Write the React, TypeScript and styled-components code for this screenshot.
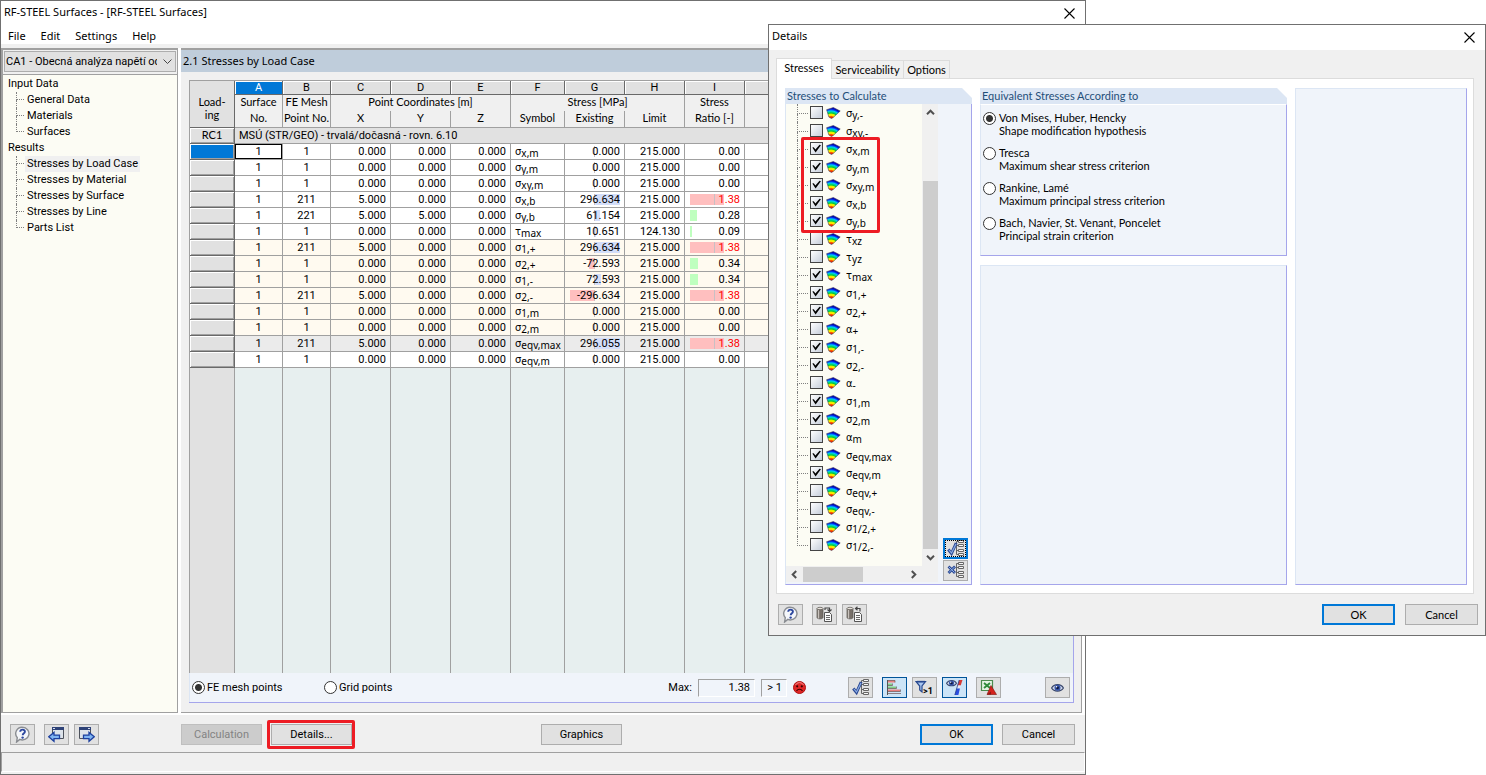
import React from "react";
import styled, { createGlobalStyle, css } from "styled-components";

const ui = `Roboto, "Liberation Sans", sans-serif`;
const caption = `"Noto Sans", "Open Sans", sans-serif`;
const compact = `Lato, "Liberation Sans", sans-serif`;

const Global = createGlobalStyle`
  *, *::before, *::after { box-sizing: border-box; }
  body { margin: 0; background: #fff; color: #000; font: 11px/16px ${ui}; }
  button, input, select { font: inherit; color: inherit; margin: 0; }
  ul { list-style: none; margin: 0; padding: 0; }
  h1, h2, h3 { margin: 0; font-weight: 400; font-size: 11px; }
`;

const Desktop = styled.div`
  position: relative;
  min-height: 100vh;
  display: flex;
  padding-right: 400px;
`;

/* ---------- shared controls ---------- */

const CloseButton = styled.button`
  width: 31px;
  height: 24px;
  padding: 0;
  border: 0;
  background: none;
  display: grid;
  place-items: center;
`;

const PushButton = styled.button<{ $w: number; $primary?: boolean }>`
  position: relative;
  width: ${(p) => p.$w}px;
  height: 21px;
  padding: 0;
  border: ${(p) => (p.$primary ? "2px solid #0078d7" : "1px solid #adadad")};
  background: #e1e1e1;
  text-align: center;
  line-height: 16px;
  &:disabled {
    background: #cccccc;
    border-color: #bfbfbf;
    color: #838383;
  }
`;

const RedFrame = css`
  content: "";
  position: absolute;
  border: 3px solid #ed1c24;
  border-radius: 2px;
  pointer-events: none;
`;

const HighlightedButton = styled(PushButton)`
  &::after {
    ${RedFrame}
    inset: -5px -4px -5px -5px;
  }
`;

const IconButton = styled.button<{ $on?: boolean; $focus?: boolean }>`
  width: 25px;
  height: 21px;
  padding: 0;
  display: grid;
  place-items: center;
  border: 1px solid ${(p) => (p.$on ? "#005499" : "#adadad")};
  background: ${(p) => (p.$on ? "#cce4f7" : "#e1e1e1")};
  ${(p) => p.$focus && "border: 2px solid #0078d7; outline: 1px dotted #000; outline-offset: -3px;"}
`;

const Radio = styled.input.attrs({ type: "radio" })`
  appearance: none;
  flex: none;
  width: 13px;
  height: 13px;
  border: 1px solid #333;
  border-radius: 50%;
  background: #fff;
  &:checked {
    background: radial-gradient(circle, #333 0 3px, #fff 4px);
  }
`;

const Check = styled.input.attrs({ type: "checkbox" })`
  appearance: none;
  flex: none;
  width: 13px;
  height: 13px;
  border: 1px solid #444;
  background: linear-gradient(135deg, #fff, #c6cedb);
  &:checked::after {
    content: "";
    display: block;
    width: 11px;
    height: 11px;
    background: #000;
    clip-path: polygon(12% 42%, 25% 38%, 40% 58%, 78% 16%, 90% 20%, 42% 86%);
  }
`;

/* ---------- main window ---------- */

const MainWindow = styled.div`
  flex: 1;
  min-width: 780px;
  display: flex;
  flex-direction: column;
  border: 1px solid #707070;
  background: #f0f0f0;
`;

const TitleBar = styled.header`
  flex: none;
  display: flex;
  align-items: center;
  justify-content: space-between;
  padding: 0 0 1px 3px;
  background: #fff;
  font-family: ${caption};
  line-height: 14px;
`;

const WindowTitle = styled.h1`
  padding-bottom: 2px;
`;

const MenuBar = styled.nav`
  height: 18px;
  flex: none;
  display: flex;
  align-items: center;
  gap: 15px;
  padding: 2px 0 0 7px;
  background: #fff;
  font-family: ${caption};
`;

const MenuItem = styled.button`
  padding: 0;
  border: 0;
  background: none;
  line-height: 16px;
`;

const Workspace = styled.div`
  flex: 1;
  display: flex;
  gap: 3px;
  margin-top: 4px;
  padding-right: 3px;
  background: #fff;
  border-bottom: 2px solid #fff;
`;

const Sidebar = styled.aside`
  flex: none;
  width: 177px;
  display: flex;
  flex-direction: column;
  border: 1px solid #a0a0a0;
  border-width: 2px 1px 1px 2px;
  background: #fcfcf4;
`;

const CaseBar = styled.div`
  position: relative;
  height: 25px;
  padding: 1px 1px 2px;
  background: #f0f0f0;
  border-bottom: 1px solid #a0a0a0;
`;

const CaseSelect = styled.select`
  appearance: none;
  display: block;
  width: 100%;
  height: 21px;
  padding: 0 18px 0 1px;
  border: 1px solid #adadad;
  border-radius: 0;
  background: #e1e1e1;
  text-overflow: clip;
`;

const SelectArrow = styled.svg`
  position: absolute;
  right: 5px;
  top: 9px;
  pointer-events: none;
`;

const Tree = styled.ul`
  && { padding-top: 1px; }
`;

const TreeRoot = styled.li`
  padding-left: 5px;
`;

const TreeChildren = styled.ul`
  && { padding-left: 8px; }
`;

const TreeLeaf = styled.li`
  position: relative;
  height: 16px;
  padding-left: 9px;
  &::before {
    content: "";
    position: absolute;
    left: 0;
    top: 0;
    width: 8px;
    height: 8px;
    border-left: 1px dotted #808080;
    border-bottom: 1px dotted #808080;
  }
  &:not(:last-child)::after {
    content: "";
    position: absolute;
    left: 0;
    top: 8px;
    height: 8px;
    border-left: 1px dotted #808080;
  }
`;

const TreeLink = styled.a<{ $active?: boolean }>`
  display: inline-block;
  padding: 0 2px;
  color: inherit;
  text-decoration: none;
  background: ${(p) => (p.$active ? "#f0f0f0" : "none")};
`;

const Content = styled.main`
  flex: 1;
  min-width: 0;
  display: flex;
  flex-direction: column;
  border: 0 solid #a0a0a0;
  border-width: 2px 1px 1px 0;
  background: #f0f0f0;
`;

const ContentHeading = styled.h2`
  flex: none;
  padding: 0 2px;
  background: #bfcddb;
  line-height: 22px;
  font-family: ${caption};
`;

const GridPanel = styled.section`
  flex: 1;
  display: flex;
  flex-direction: column;
  margin: 8px 7px 9px 8px;
  border: 0 solid #a5a5eb;
  border-width: 0 1px 1px 0;
`;

const Sheet = styled.table`
  flex: 1;
  width: 100%;
  table-layout: fixed;
  border-collapse: separate;
  border-spacing: 0;
  border-top: 1px solid #a0a0a0;
  border-left: 1px solid #a0a0a0;
  background: #f0f0f0;
  th, td { padding: 0; font-weight: 400; overflow: hidden; white-space: nowrap; line-height: 14px; }
  th { font-family: ${compact}; }
`;

const Col = styled.col<{ $w?: number }>`
  width: ${(p) => (p.$w ? `${p.$w}px` : "auto")};
`;

const Tr = styled.tr<{ $h: number; $bg?: string }>`
  height: ${(p) => p.$h}px;
  background: ${(p) => p.$bg ?? "transparent"};
`;

const CornerTh = styled.th`
  background: #e1e1e1;
  border-right: 1px solid #696969;
  border-bottom: 1px solid #696969;
`;

const CornerText = styled.span`
  display: block;
  line-height: 13px;
  padding-top: 8px;
`;

const LetterTh = styled.th<{ $active?: boolean }>`
  background: ${(p) => (p.$active ? "#0078d7" : "#e1e1e1")};
  color: ${(p) => (p.$active ? "#fff" : "#000")};
  border-right: 1px solid #696969;
  border-bottom: 1px solid #696969;
  box-shadow: inset 1px 1px #fff;
  && { line-height: 13px; font-family: ${ui}; }
`;

const HeadTh = styled.th<{ $last?: boolean }>`
  border-right: 1px solid #a0a0a0;
  border-bottom: ${(p) => (p.$last ? "1px solid #a0a0a0" : "0")};
  vertical-align: top;
  && { line-height: 13px; }
`;

const RowTh = styled.th<{ $active?: boolean }>`
  background: ${(p) => (p.$active ? "#0078d7" : "#e1e1e1")};
  border-right: 1px solid #696969;
  border-bottom: 1px solid #696969;
  box-shadow: inset 1px 1px #fff, inset -1px -1px #a0a0a0;
  vertical-align: top;
`;

const GroupTd = styled.td`
  && { padding: 1px 0 0 4px; }
  background: #e1e1e1;
  border-bottom: 1px solid #a0a0a0;
`;

const Td = styled.td<{ $align?: "center" | "right" | "left"; $alert?: boolean; $cursor?: boolean }>`
  position: relative;
  text-align: ${(p) => p.$align ?? "right"};
  color: ${(p) => (p.$alert ? "#ff0000" : "inherit")};
  border-right: 1px solid #a0a0a0;
  border-bottom: 1px solid #a0a0a0;
  && { padding: 1px ${(p) => ((p.$align ?? "right") === "right" ? "4px 0 0" : p.$align === "left" ? "0 0 4px" : "0 0")}; }
  ${(p) => p.$cursor && "box-shadow: inset 0 0 0 1px #000;"}
`;

const EmptyTd = styled.td<{ $head?: boolean }>`
  background: ${(p) => (p.$head ? "#e1e1e1" : "#e7efef")};
  border-right: 1px solid #a0a0a0;
  &:last-child { border-right: 0; }
`;

const Bar = styled.span<{ $tone: "blue" | "red" | "green" }>`
  position: absolute;
  top: 2px;
  height: 11px;
  background: ${(p) => ({ blue: "#d3defa", red: "#ffbfbf", green: "#bfffbf" })[p.$tone]};
`;

const Axis = styled.span<{ $at: number }>`
  position: absolute;
  top: 2px;
  left: ${(p) => p.$at}px;
  width: 1px;
  height: 11px;
  background: #c8c0c4;
`;

const CellText = styled.span`
  position: relative;
`;

const SymbolText = styled.span`
  display: inline-flex;
  align-items: baseline;
  font: 10px/14px "DejaVu Sans", sans-serif;
`;

const SymbolSub = styled.sub`
  position: relative;
  top: 2px;
  vertical-align: baseline;
  font: 10px/12px "Noto Sans", sans-serif;
`;

const Toolbar = styled.div`
  flex: none;
  height: 29px;
  display: flex;
  align-items: center;
  padding: 0 3px 0 2px;
  border-left: 1px solid #dce6f4;
  background: #f0f4fa;
`;

const RadioLabel = styled.label`
  display: flex;
  align-items: center;
  gap: 2px;
  width: 132px;
`;

const MaxGroup = styled.div`
  flex: 1;
  display: flex;
  justify-content: flex-end;
  align-items: center;
  gap: 6px;
  margin-right: 42px;
`;

const Readout = styled.output<{ $w: number }>`
  width: ${(p) => p.$w}px;
  height: 18px;
  padding-right: 4px;
  border: 1px solid #a0a0a0;
  border-right-color: #fff;
  border-bottom-color: #fff;
  text-align: right;
  line-height: 16px;
`;

const ToolButtons = styled.div`
  display: flex;
  gap: 9px;
`;

const ToolPair = styled.div`
  display: flex;
  gap: 5px;
`;

const FarTool = styled.div`
  margin-left: 44px;
`;

const Footer = styled.footer`
  flex: none;
  display: flex;
  gap: 9px;
  padding: 9px 10px 7px 9px;
`;

const FooterActions = styled.div`
  display: flex;
  gap: 9px;
  margin-left: 73px;
`;

const GraphicsSlot = styled.div`
  flex: 1;
  margin-left: 180px;
`;

const StatusBar = styled.div`
  flex: none;
  height: 22px;
  padding-bottom: 2px;
  &::before {
    content: "";
    display: block;
    height: 20px;
    border: 1px solid #a0a0a0;
    border-right-color: #fff;
    border-bottom-color: #fff;
  }
`;

/* ---------- details dialog ---------- */

const Dialog = styled.div`
  position: absolute;
  top: 24px;
  right: 0;
  width: calc(100% - 768px);
  min-width: 700px;
  border: 1px solid #707070;
  background: #f0f0f0;
  font-family: ${compact};
`;

const TabStrip = styled.div`
  display: flex;
  align-items: flex-end;
  padding: 8px 7px 0;
`;

const Tab = styled.button<{ $active?: boolean; $w: number }>`
  position: relative;
  width: ${(p) => p.$w}px;
  height: ${(p) => (p.$active ? 21 : 18)}px;
  margin-bottom: ${(p) => (p.$active ? "-1px" : "0")};
  padding: 0 0 ${(p) => (p.$active ? 2 : 0)}px;
  border: 1px solid #dcdcdc;
  border-bottom: 0;
  border-left-width: ${(p) => (p.$active ? 1 : 0)}px;
  background: ${(p) => (p.$active ? "#fff" : "#f0f0f0")};
  z-index: 1;
`;

const TabPage = styled.div`
  display: grid;
  grid-template-columns: 187px 307px 1fr;
  gap: 8px;
  min-height: 516px;
  margin: 0 11px 0 7px;
  padding: 9px 6px 8px 8px;
  border: 1px solid #dcdcdc;
  background: #fff;
`;

const Stack = styled.div`
  display: grid;
  grid-template-rows: 168px 1fr;
  gap: 9px;
`;

const Group = styled.section`
  border: 1px solid #dce6f4;
  border-right-color: #a5a5eb;
  border-bottom-color: #a5a5eb;
  background: #f0f4fa;
`;

const TitledGroup = styled.section`
  display: flex;
  flex-direction: column;
`;

const GroupHeading = styled.h3`
  flex: none;
  height: 16px;
  padding-left: 2px;
  background: #dce6f4;
  color: #1f4e79;
  line-height: 15px;
  clip-path: polygon(0 0, calc(100% - 10px) 0, 100% 10px, 100% 100%, 0 100%);
`;

const GroupBody = styled.div`
  flex: 1;
  display: flex;
  border: 0 solid #a5a5eb;
  border-width: 0 1px 1px 0;
  border-left: 1px solid #dce6f4;
  background: #f0f4fa;
`;

const OptionsBody = styled(GroupBody)`
  flex-direction: column;
  gap: 10px;
  padding: 6px 0 0 2px;
  border-top: 1px solid #fff;
`;

const OptionLabel = styled.label`
  display: flex;
  gap: 3px;
  line-height: 13px;
  ${Radio} { margin-top: 1px; }
`;

const OptionText = styled.span`
  display: grid;
  height: 25px;
  align-content: start;
`;

const ListView = styled.div`
  flex: none;
  display: grid;
  grid-template: 1fr 16px / 136px 16px;
  margin: 0 5px 2px 0;
`;

const StressList = styled.ul`
  position: relative;
  background: #fcfcf4;
  && { padding-left: 11px; }
  &::after {
    ${RedFrame}
    left: 15px;
    top: 33px;
    width: 79px;
    height: 96px;
  }
`;

const StressItem = styled.li`
  position: relative;
  height: 18px;
  padding-left: 13px;
  &::before {
    content: "";
    position: absolute;
    left: 0;
    top: 0;
    width: 11px;
    height: 10px;
    border-left: 1px dotted #808080;
    border-bottom: 1px dotted #808080;
  }
  &:not(:last-child)::after {
    content: "";
    position: absolute;
    left: 0;
    top: 10px;
    height: 8px;
    border-left: 1px dotted #808080;
  }
`;

const StressLabel = styled.label`
  display: flex;
  align-items: center;
  gap: 3px;
  height: 17px;
  svg { margin-right: 2px; }
  ${SymbolText} { padding-top: 2px; }
`;

const VScroll = styled.div`
  display: grid;
  grid-template-rows: 17px 1fr 17px;
  justify-items: center;
  align-items: center;
  background: #f0f0f0;
`;

const VThumb = styled.div`
  align-self: end;
  width: 15px;
  height: 86%;
  background: #cdcdcd;
`;

const HScroll = styled.div`
  grid-column: 1 / -1;
  display: flex;
  align-items: center;
  justify-content: space-between;
  padding: 0 20px 0 4px;
  background: #f0f0f0;
`;

const HThumb = styled.div`
  width: 60px;
  height: 15px;
  margin-right: auto;
  margin-left: 4px;
  background: #cdcdcd;
`;

const SideTools = styled.div`
  display: flex;
  flex-direction: column;
  justify-content: flex-end;
  gap: 1px;
  padding-bottom: 3px;
`;

const DialogFooter = styled.footer`
  display: flex;
  gap: 5px;
  padding: 10px 7px 10px 9px;
`;

const DialogActions = styled.div`
  display: flex;
  gap: 10px;
  margin-left: auto;
`;

const HelpSlot = styled.div`
  margin-right: 4px;
`;

/* ---------- icons ---------- */

const Cross = () => (
  <svg width="11" height="11" viewBox="0 0 11 11" stroke="#000" strokeWidth="1.1">
    <path d="M.5.5l10 10M10.5.5l-10 10" />
  </svg>
);

const Chevron = ({ turn = 0 }: { turn?: number }) => (
  <svg width="9" height="9" viewBox="0 0 9 9" fill="none" stroke="#505050" strokeWidth="2">
    <path d="M1 6.2L4.500 2.700 8 6.200" transform={`rotate(${turn} 4.5 4.5)`} />
  </svg>
);

const HelpIcon = () => (
  <svg width="17" height="17" viewBox="0 0 17 17">
    <path d="M8.500 1.300a6.600 6.300 0 1 1-2.700 12.100L2.600 16l.7-4.300A6.400 6.300 0 0 1 8.500 1.300z" fill="#f4f6fa" stroke="#8a8d92" strokeWidth="1.400" />
    <path d="M6.200 5.700c.2-2.800 4.900-2.700 4.700 0-.1 1.600-2.200 1.700-2.200 3.600" fill="none" stroke="#2b469e" strokeWidth="1.900" />
    <circle cx="8.600" cy="11.600" r="1.200" fill="#2b469e" />
  </svg>
);

const WindowArrow = ({ next }: { next?: boolean }) => (
  <svg width="17" height="17" viewBox="0 0 17 17">
    <g transform={next ? "translate(17 0) scale(-1 1)" : undefined}>
      <path d="M4.500 1.500h11v11h-11z" fill="#dde3ea" stroke="#4d525c" />
      <path d="M4 1h12v3H4z" fill="#2f4378" />
      <path d="M5 2h2v1H5z" fill="#d5dcf0" />
      <path d="M.7 10.800L6 6.400v2.700h5.500v3.500H6v2.700z" fill="#7fb4f2" stroke="#1c3f9e" strokeWidth="1.300" />
    </g>
  </svg>
);

const Branches = () => (
  <g fill="none" stroke="#666">
    <path d="M9.500 1.500v13M9.500 1.500h2M9.500 5.500h2M9.500 10.500h2M9.500 14.500h2" />
    <path d="M11.500.5h5v2h-5zM11.500 4.500h5v2h-5zM11.500 9.500h5v2h-5zM11.500 13.500h5v2h-5z" fill="#f6f6f6" />
  </g>
);

const CheckTree = () => (
  <svg width="18" height="17" viewBox="0 0 18 17">
    <Branches />
    <path d="M1.300 9.500l3.200 4L9.200 3" fill="none" stroke="#2c4a94" strokeWidth="3" />
    <path d="M2 10l2.500 3L9 4" fill="none" stroke="#8fb0e8" strokeWidth="1.100" />
  </svg>
);

const CrossTree = () => (
  <svg width="18" height="17" viewBox="0 0 18 17">
    <Branches />
    <path d="M1.500 4.500l6.500 6.500M8 4.500L1.500 11" stroke="#2c4a94" strokeWidth="2.800" />
    <path d="M2 5l5.500 5.500M7.500 5L2 10.500" stroke="#8fb0e8" strokeWidth="1" />
  </svg>
);

const BarsIcon = () => (
  <svg width="17" height="15" viewBox="0 0 17 15">
    <path d="M1.500 0v15" stroke="#555" />
    <path d="M2 1.500h7M2 10.500h12" stroke="#e88080" strokeWidth="2" />
    <path d="M2 4.500h4M2 7.500h8" stroke="#80cc84" strokeWidth="2" />
    <path d="M2 .5h7v2M2 5.500h4.500v-2M2 8.500h8.500v-2M2 11.500h12.500v-2M2 13.500h13" fill="none" stroke="#6b5555" strokeWidth=".7" />
  </svg>
);

const FilterSvgText = styled.text`
  font: 700 9px Roboto, sans-serif;
`;

const FilterIcon = () => (
  <svg width="19" height="15" viewBox="0 0 19 15">
    <path d="M1 1.500h9.500L7 6v6L4.700 10V6z" fill="#a9c6f0" stroke="#27488f" strokeWidth="1.200" />
    <path d="M2 1.700h8" stroke="#27488f" strokeWidth="1.700" />
    <FilterSvgText x="8" y="14">&gt;1</FilterSvgText>
  </svg>
);

const Eye = ({ s = 1, y = 0 }: { s?: number; y?: number }) => (
  <g transform={`translate(0 ${y}) scale(${s})`}>
    <path d="M.6 5C3 .8 10 .4 12.400 5 10 9 3 9.200.6 5z" fill="#cdd6ea" stroke="#39476c" strokeWidth="1.200" />
    <circle cx="6.500" cy="4.800" r="3" fill="#3553a8" />
    <circle cx="6.500" cy="4.800" r="1.400" fill="#0c153a" />
    <circle cx="5.500" cy="3.700" r=".8" fill="#fff" />
  </g>
);

const EyeIcon = () => (
  <svg width="13" height="10" viewBox="0 0 13 10">
    <Eye />
  </svg>
);

const EyeScaleIcon = () => (
  <svg width="17" height="17" viewBox="0 0 17 17">
    <path d="M16.500 1h-3.300l-1.700 5.500h3.200z" fill="#d83a35" />
    <path d="M14.700 6.500h-3.200l-.9 3h3.300z" fill="#e9ecf6" />
    <path d="M13.900 9.500h-3.300L8.800 16h3.600z" fill="#2a4ee0" />
    <path d="M13.200 1L8.800 16" stroke="#29408c" strokeWidth=".8" />
    <Eye s={0.85} y={0} />
  </svg>
);

const SheetIcon = () => (
  <svg width="17" height="17" viewBox="0 0 17 17">
    <path d="M1.500 1.500h11v10h-11z" fill="#e4f3e4" stroke="#4b8b4e" strokeWidth="1.200" />
    <path d="M4 4l6 5M10 4L4 9" stroke="#2e8b3a" strokeWidth="1.900" />
    <path d="M11 6.500L16.500 15.500h-9.500z" fill="#d4221c" stroke="#7d100c" strokeWidth=".6" />
    <path d="M7 15.500h4v-3z" fill="#8c1914" />
  </svg>
);

const SadIcon = () => (
  <svg width="13" height="13" viewBox="0 0 13 13">
    <circle cx="6.500" cy="6.500" r="6" fill="#e02626" stroke="#b01212" />
    <path d="M2.500 4a4.500 4.500 0 0 1 8 0" fill="none" stroke="#f38c8c" strokeWidth="1" />
    <circle cx="4.200" cy="5.300" r="1.100" fill="#3a0000" />
    <circle cx="8.800" cy="5.300" r="1.100" fill="#3a0000" />
    <path d="M3.500 10c1.500-2.300 4.500-2.300 6 0" fill="none" stroke="#3a0000" strokeWidth="1.100" />
  </svg>
);

const PresetIcon = ({ save }: { save?: boolean }) => (
  <svg width="17" height="17" viewBox="0 0 17 17">
    <path d="M1 2.500v9c0 1.800 6 1.800 6 0v-9" fill="#77706a" stroke="#55504c" strokeWidth=".7" />
    <path d="M2.500 3v9.500" stroke="#c9c3bd" strokeWidth="1.300" />
    <ellipse cx="4" cy="2.500" rx="3" ry="1.200" fill="#e9e4dd" stroke="#55504c" strokeWidth=".7" />
    <path d="M8.500 6.500h5l2 2v7h-7z" fill="#fafafa" stroke="#555" />
    <path d="M10 9.500h4M10 11.500h4M10 13.500h4" stroke="#666" />
    {save ? (
      <path d="M14 5.500V2.500H10M11.500.7L9.500 2.500l2 1.800" fill="none" stroke="#444" strokeWidth="1.200" />
    ) : (
      <path d="M9 4V2h4.500v3M11.500 3.500l2 2 2-2" fill="none" stroke="#444" strokeWidth="1.200" />
    )}
  </svg>
);

const ContourIcon = () => (
  <svg width="15" height="12" viewBox="0 0 15 12">
    <defs>
      <radialGradient id="contour" gradientUnits="userSpaceOnUse" cx="5" cy="14" r="13.500">
        <stop offset=".2" stopColor="#e00000" />
        <stop offset=".34" stopColor="#ff5a00" />
        <stop offset=".42" stopColor="#fff000" />
        <stop offset=".52" stopColor="#d8f000" />
        <stop offset=".58" stopColor="#00c83c" />
        <stop offset=".68" stopColor="#00d89a" />
        <stop offset=".75" stopColor="#00c8ff" />
        <stop offset=".82" stopColor="#0050ff" />
        <stop offset=".92" stopColor="#0000b8" />
      </radialGradient>
    </defs>
    <path d="M.6 2.700L7.300.5l6.900 3.500-6.700 6.300-2 1.200-2.600-1.400z" fill="url(#contour)" stroke="#445" strokeWidth=".6" />
  </svg>
);

/* ---------- data ---------- */

type Row = {
  point: number;
  x: string;
  y: string;
  sym: [string, string];
  stress: number;
  limit: string;
  ratio: number;
  bg: string;
};

const WHITE = "#ffffff";
const CREAM = "#fffaf0";
const GREY = "#ebebeb";

const row = (point: number, x: string, y: string, sym: [string, string], stress: number, ratio: number, bg = WHITE, limit = "215.000"): Row => ({
  point, x, y, sym, stress, limit, ratio, bg,
});

const rows: Row[] = [
  row(1, "0.000", "0.000", ["σ", "x,m"], 0, 0),
  row(1, "0.000", "0.000", ["σ", "y,m"], 0, 0),
  row(1, "0.000", "0.000", ["σ", "xy,m"], 0, 0),
  row(211, "5.000", "0.000", ["σ", "x,b"], 296.634, 1.38),
  row(221, "5.000", "5.000", ["σ", "y,b"], 61.154, 0.28),
  row(1, "0.000", "0.000", ["τ", "max"], 10.651, 0.09, WHITE, "124.130"),
  row(211, "5.000", "0.000", ["σ", "1,+"], 296.634, 1.38, CREAM),
  row(1, "0.000", "0.000", ["σ", "2,+"], -72.593, 0.34, CREAM),
  row(1, "0.000", "0.000", ["σ", "1,-"], 72.593, 0.34, CREAM),
  row(211, "5.000", "0.000", ["σ", "2,-"], -296.634, 1.38, CREAM),
  row(1, "0.000", "0.000", ["σ", "1,m"], 0, 0, CREAM),
  row(1, "0.000", "0.000", ["σ", "2,m"], 0, 0, CREAM),
  row(211, "5.000", "0.000", ["σ", "eqv,max"], 296.055, 1.38, GREY),
  row(1, "0.000", "0.000", ["σ", "eqv,m"], 0, 0),
];

const stresses: [string, string, boolean][] = [
  ["σ", "y,-", false],
  ["σ", "xy,-", false],
  ["σ", "x,m", true],
  ["σ", "y,m", true],
  ["σ", "xy,m", true],
  ["σ", "x,b", true],
  ["σ", "y,b", true],
  ["τ", "xz", false],
  ["τ", "yz", false],
  ["τ", "max", true],
  ["σ", "1,+", true],
  ["σ", "2,+", true],
  ["α", "+", false],
  ["σ", "1,-", true],
  ["σ", "2,-", true],
  ["α", "-", false],
  ["σ", "1,m", true],
  ["σ", "2,m", true],
  ["α", "m", false],
  ["σ", "eqv,max", true],
  ["σ", "eqv,m", true],
  ["σ", "eqv,+", false],
  ["σ", "eqv,-", false],
  ["σ", "1/2,+", false],
  ["σ", "1/2,-", false],
];

const theories = [
  ["Von Mises, Huber, Hencky", "Shape modification hypothesis"],
  ["Tresca", "Maximum shear stress criterion"],
  ["Rankine, Lamé", "Maximum principal stress criterion"],
  ["Bach, Navier, St. Venant, Poncelet", "Principal strain criterion"],
];

const navigation = [
  { title: "Input Data", items: ["General Data", "Materials", "Surfaces"] },
  {
    title: "Results",
    items: ["Stresses by Load Case", "Stresses by Material", "Stresses by Surface", "Stresses by Line", "Parts List"],
  },
];

const columns = [45, 48, 48, 60, 60, 60, 54, 60, 60, 60];
const letters = ["A", "B", "C", "D", "E", "F", "G", "H", "I"];

const Sym = ({ base, sub }: { base: string; sub: string }) => (
  <SymbolText>
    {base}
    <SymbolSub>{sub}</SymbolSub>
  </SymbolText>
);

const StressCell = ({ value }: { value: number }) => {
  const width = Math.round((Math.abs(value) / 296.634) * 25);
  return (
    <Td>
      {width > 0 && <Bar $tone={value < 0 ? "red" : "blue"} style={{ width, left: value < 0 ? 30 - width : 30 }} />}
      <Axis $at={29} />
      <CellText>{value.toFixed(3)}</CellText>
    </Td>
  );
};

const RatioCell = ({ value }: { value: number }) => {
  const over = value > 1;
  return (
    <Td $alert={over}>
      {value > 0 && <Bar $tone={over ? "red" : "green"} style={{ left: 5, width: Math.round(value * 24.6) }} />}
      {over && <Axis $at={29} />}
      <CellText>{value.toFixed(2)}</CellText>
    </Td>
  );
};

const ResultTable = () => (
  <Sheet>
    <colgroup>
      {columns.map((w, i) => (
        <Col key={i} $w={w} />
      ))}
      <Col />
    </colgroup>
    <thead>
      <Tr $h={14}>
        <CornerTh rowSpan={3}>
          <CornerText>
            Load-
            <br />
            ing
          </CornerText>
        </CornerTh>
        {letters.map((l, i) => (
          <LetterTh key={l} $active={i === 0}>
            {l}
          </LetterTh>
        ))}
        <LetterTh />
      </Tr>
      <Tr $h={16}>
        <HeadTh>Surface</HeadTh>
        <HeadTh>FE Mesh</HeadTh>
        <HeadTh colSpan={3}>Point Coordinates [m]</HeadTh>
        <HeadTh colSpan={3}>Stress [MPa]</HeadTh>
        <HeadTh>Stress</HeadTh>
        <HeadTh />
      </Tr>
      <Tr $h={17}>
        {["No.", "Point No.", "X", "Y", "Z", "Symbol", "Existing", "Limit", "Ratio [-]", ""].map((t, i) => (
          <HeadTh key={i} $last>
            {t}
          </HeadTh>
        ))}
      </Tr>
    </thead>
    <tbody>
      <Tr $h={16}>
        <RowTh>RC1</RowTh>
        <GroupTd colSpan={10}>MSÚ (STR/GEO) - trvalá/dočasná - rovn. 6.10</GroupTd>
      </Tr>
      {rows.map((r, i) => (
        <Tr key={i} $h={16} $bg={r.bg}>
          <RowTh $active={i === 0} />
          <Td $align="center" $cursor={i === 0}>1</Td>
          <Td $align="center">{r.point}</Td>
          <Td>{r.x}</Td>
          <Td>{r.y}</Td>
          <Td>0.000</Td>
          <Td $align="left">
            <Sym base={r.sym[0]} sub={r.sym[1]} />
          </Td>
          <StressCell value={r.stress} />
          <Td>{r.limit}</Td>
          <RatioCell value={r.ratio} />
          <Td />
        </Tr>
      ))}
      <tr>
        {columns.map((_, i) => (
          <EmptyTd key={i} $head={i === 0} />
        ))}
        <EmptyTd />
      </tr>
    </tbody>
  </Sheet>
);

const DetailsDialog = () => (
  <Dialog role="dialog" aria-label="Details">
    <TitleBar>
      <WindowTitle as="h2">Details</WindowTitle>
      <CloseButton aria-label="Close">
        <Cross />
      </CloseButton>
    </TitleBar>
    <TabStrip>
      <Tab $active $w={56}>Stresses</Tab>
      <Tab $w={72}>Serviceability</Tab>
      <Tab $w={46}>Options</Tab>
    </TabStrip>
    <TabPage>
      <TitledGroup>
        <GroupHeading>Stresses to Calculate</GroupHeading>
        <GroupBody>
          <ListView>
            <StressList>
              {stresses.map(([base, sub, on]) => (
                <StressItem key={base + sub}>
                  <StressLabel>
                    <Check defaultChecked={on} />
                    <ContourIcon />
                    <Sym base={base} sub={sub} />
                  </StressLabel>
                </StressItem>
              ))}
            </StressList>
            <VScroll>
              <Chevron />
              <VThumb />
              <Chevron turn={180} />
            </VScroll>
            <HScroll>
              <Chevron turn={-90} />
              <HThumb />
              <Chevron turn={90} />
            </HScroll>
          </ListView>
          <SideTools>
            <IconButton $focus aria-label="Select all">
              <CheckTree />
            </IconButton>
            <IconButton aria-label="Deselect all">
              <CrossTree />
            </IconButton>
          </SideTools>
        </GroupBody>
      </TitledGroup>
      <Stack>
        <TitledGroup>
          <GroupHeading>Equivalent Stresses According to</GroupHeading>
          <OptionsBody>
            {theories.map(([name, note], i) => (
              <OptionLabel key={name}>
                <Radio name="theory" defaultChecked={i === 0} />
                <OptionText>
                  <span>{name}</span>
                  <span>{note}</span>
                </OptionText>
              </OptionLabel>
            ))}
          </OptionsBody>
        </TitledGroup>
        <Group />
      </Stack>
      <Group />
    </TabPage>
    <DialogFooter>
      <HelpSlot>
        <IconButton aria-label="Help">
          <HelpIcon />
        </IconButton>
      </HelpSlot>
      <IconButton aria-label="Load defaults">
        <PresetIcon />
      </IconButton>
      <IconButton aria-label="Save as defaults">
        <PresetIcon save />
      </IconButton>
      <DialogActions>
        <PushButton $w={73} $primary>OK</PushButton>
        <PushButton $w={73}>Cancel</PushButton>
      </DialogActions>
    </DialogFooter>
  </Dialog>
);

export default function App() {
  return (
    <>
      <Global />
      <Desktop>
        <MainWindow>
          <TitleBar>
            <WindowTitle>RF-STEEL Surfaces - [RF-STEEL Surfaces]</WindowTitle>
            <CloseButton aria-label="Close">
              <Cross />
            </CloseButton>
          </TitleBar>
          <MenuBar>
            {["File", "Edit", "Settings", "Help"].map((m) => (
              <MenuItem key={m}>{m}</MenuItem>
            ))}
          </MenuBar>
          <Workspace>
            <Sidebar>
              <CaseBar>
                <CaseSelect aria-label="Design case">
                  <option>CA1 - Obecná analýza napětí oc</option>
                </CaseSelect>
                <SelectArrow width="9" height="6" viewBox="0 0 9 6" fill="none" stroke="#444">
                  <path d="M.5.5l4 4 4-4" />
                </SelectArrow>
              </CaseBar>
              <Tree>
                {navigation.map((group) => (
                  <TreeRoot key={group.title}>
                    {group.title}
                    <TreeChildren>
                      {group.items.map((item) => (
                        <TreeLeaf key={item}>
                          <TreeLink href="#" $active={item === "Stresses by Load Case"}>
                            {item}
                          </TreeLink>
                        </TreeLeaf>
                      ))}
                    </TreeChildren>
                  </TreeRoot>
                ))}
              </Tree>
            </Sidebar>
            <Content>
              <ContentHeading>2.1 Stresses by Load Case</ContentHeading>
              <GridPanel>
                <ResultTable />
                <Toolbar>
                  <RadioLabel>
                    <Radio name="points" defaultChecked />
                    FE mesh points
                  </RadioLabel>
                  <RadioLabel>
                    <Radio name="points" />
                    Grid points
                  </RadioLabel>
                  <MaxGroup>
                    <label htmlFor="max-ratio">Max:</label>
                    <Readout id="max-ratio" $w={57}>1.38</Readout>
                    <Readout $w={26}>&gt; 1</Readout>
                    <SadIcon />
                  </MaxGroup>
                  <ToolButtons>
                    <IconButton aria-label="Select results">
                      <CheckTree />
                    </IconButton>
                    <ToolPair>
                      <IconButton $on aria-label="Result bars">
                        <BarsIcon />
                      </IconButton>
                      <IconButton aria-label="Only ratios above one">
                        <FilterIcon />
                      </IconButton>
                      <IconButton $on aria-label="Colour scale">
                        <EyeScaleIcon />
                      </IconButton>
                    </ToolPair>
                    <IconButton aria-label="Export table">
                      <SheetIcon />
                    </IconButton>
                  </ToolButtons>
                  <FarTool>
                    <IconButton aria-label="View mode">
                      <EyeIcon />
                    </IconButton>
                  </FarTool>
                </Toolbar>
              </GridPanel>
            </Content>
          </Workspace>
          <Footer>
            <IconButton aria-label="Help">
              <HelpIcon />
            </IconButton>
            <ToolPair>
              <IconButton aria-label="Previous table">
                <WindowArrow />
              </IconButton>
              <IconButton aria-label="Next table">
                <WindowArrow next />
              </IconButton>
            </ToolPair>
            <FooterActions>
              <PushButton $w={81} disabled>Calculation</PushButton>
              <HighlightedButton $w={81}>Details...</HighlightedButton>
            </FooterActions>
            <GraphicsSlot>
              <PushButton $w={81}>Graphics</PushButton>
            </GraphicsSlot>
            <PushButton $w={73} $primary>OK</PushButton>
            <PushButton $w={73}>Cancel</PushButton>
          </Footer>
          <StatusBar />
        </MainWindow>
        <DetailsDialog />
      </Desktop>
    </>
  );
}
